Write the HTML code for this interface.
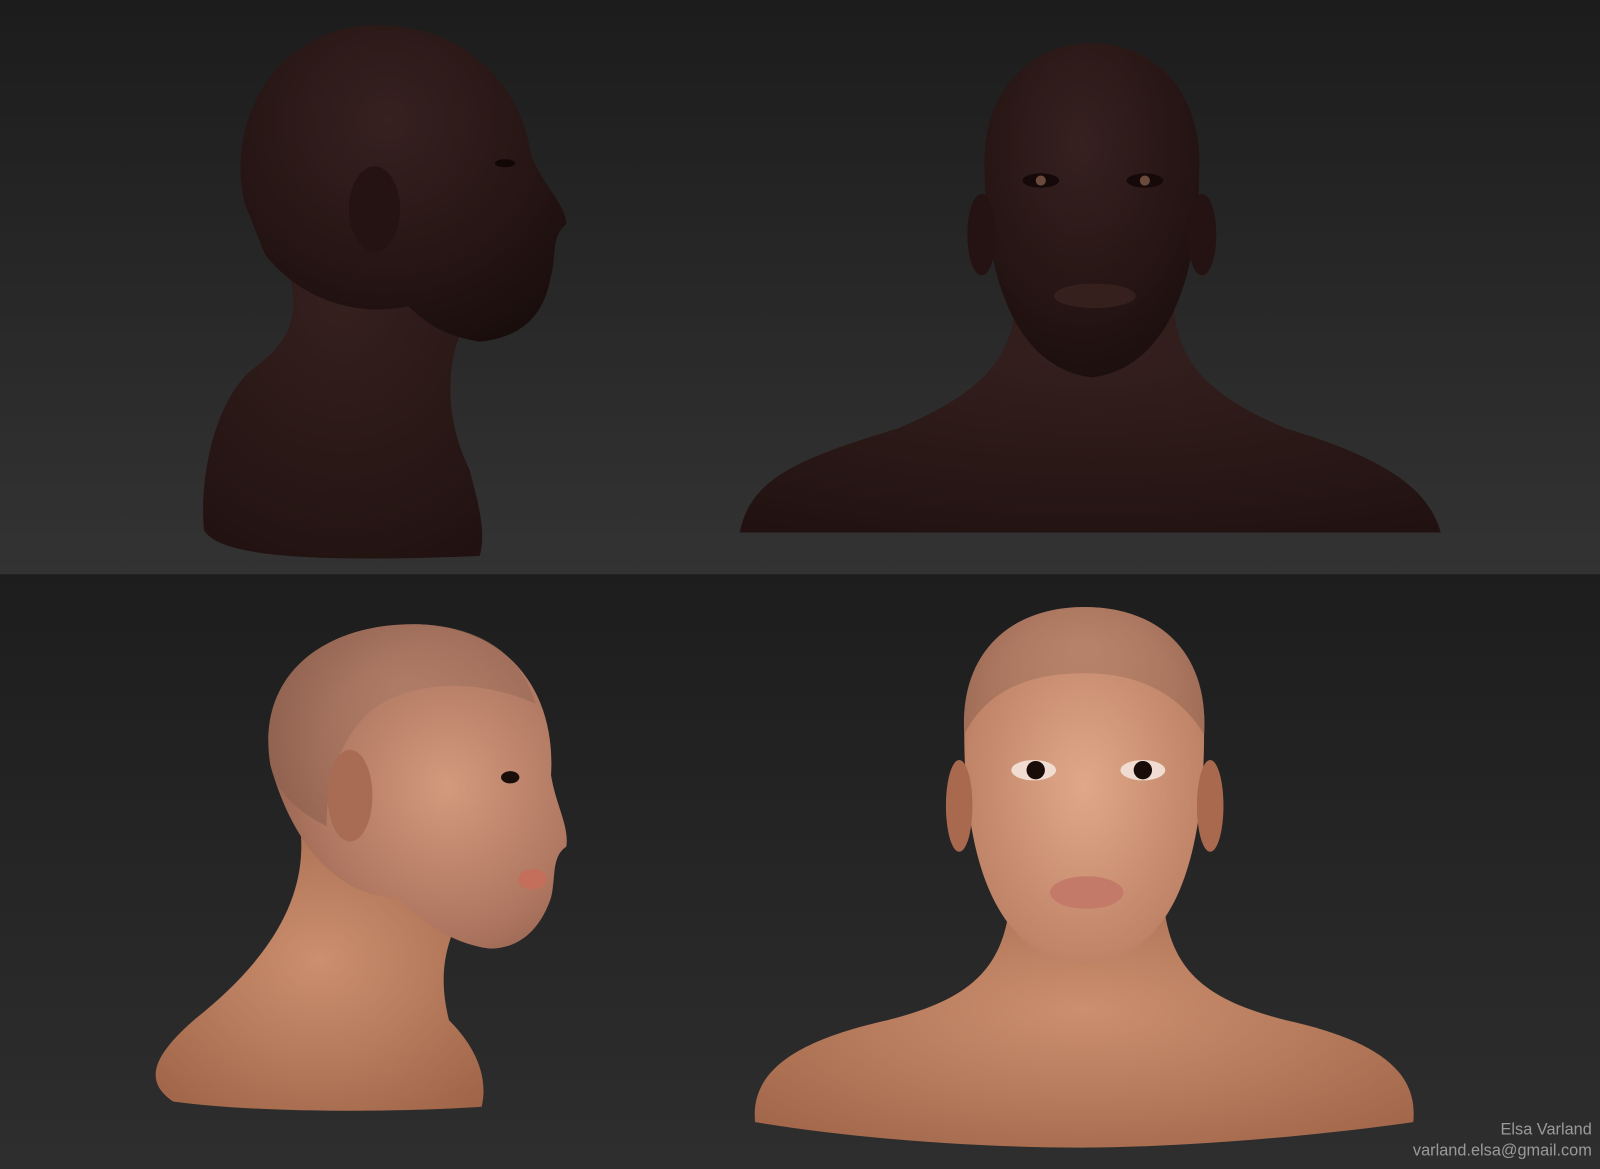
<!DOCTYPE html>
<html><head><meta charset="utf-8"><style>
html,body{margin:0;padding:0;background:#262626;}
svg{display:block;}
</style></head><body>
<svg width="1600" height="1169" viewBox="0 0 1568 1146" preserveAspectRatio="none" xmlns="http://www.w3.org/2000/svg">
<defs>
<linearGradient id="bgT" x1="0" y1="0" x2="0" y2="1"><stop offset="0" stop-color="#1c1c1c"/><stop offset="1" stop-color="#333333"/></linearGradient>
<linearGradient id="bgB" x1="0" y1="0" x2="0" y2="1"><stop offset="0" stop-color="#1d1d1d"/><stop offset="1" stop-color="#2e2e2e"/></linearGradient>
<radialGradient id="dk" cx="0.45" cy="0.3" r="0.8"><stop offset="0" stop-color="#362120"/><stop offset="0.6" stop-color="#261514"/><stop offset="1" stop-color="#180d0c"/></radialGradient>
<radialGradient id="dkb" cx="0.5" cy="0.2" r="0.9"><stop offset="0" stop-color="#35201e"/><stop offset="1" stop-color="#211211"/></radialGradient>
<radialGradient id="lt" cx="0.6" cy="0.5" r="0.75"><stop offset="0" stop-color="#d49a7e"/><stop offset="0.6" stop-color="#ae7660"/><stop offset="1" stop-color="#7e5242"/></radialGradient>
<radialGradient id="ltb" cx="0.5" cy="0.45" r="0.8"><stop offset="0" stop-color="#cc9070"/><stop offset="1" stop-color="#9a5f43"/></radialGradient>
<radialGradient id="ltf" cx="0.5" cy="0.5" r="0.7"><stop offset="0" stop-color="#e0a888"/><stop offset="0.7" stop-color="#c08468"/><stop offset="1" stop-color="#946050"/></radialGradient>
<radialGradient id="scalp" cx="0.5" cy="0.3" r="0.7"><stop offset="0" stop-color="#a87a66"/><stop offset="1" stop-color="#8a5e4c"/></radialGradient>
</defs>
<rect x="0" y="0" width="1568" height="563" fill="url(#bgT)"/>
<rect x="0" y="563" width="1568" height="583" fill="url(#bgB)"/>

<!-- top-left profile dark -->
<path d="M270,230 C300,300 290,330 250,360 C210,390 195,470 200,520 C215,545 300,552 470,545 C478,520 465,480 460,460 C440,420 435,370 450,330 L420,290 Z" fill="url(#dkb)"/>
<path d="M240,200 C220,120 270,30 360,25 C450,20 510,80 520,150 C530,180 555,200 555,220 C540,230 545,255 540,270 C535,300 520,330 470,335 C440,330 420,320 400,300 C360,310 300,300 260,250 Z" fill="url(#dk)"/>
<ellipse cx="367" cy="205" rx="25" ry="42" fill="#241312"/>
<ellipse cx="495" cy="160" rx="10" ry="4" fill="#110806"/>

<!-- top-right front dark -->
<path d="M725,522 C735,470 780,450 880,420 C950,390 990,360 995,300 L1150,300 C1155,360 1190,390 1260,420 C1360,450 1400,480 1412,522 Z" fill="url(#dkb)"/>
<path d="M965,170 C960,90 1010,42 1070,42 C1130,42 1180,90 1175,170 C1175,260 1150,360 1070,370 C990,360 965,260 965,170 Z" fill="url(#dk)"/>
<ellipse cx="962" cy="230" rx="14" ry="40" fill="#241312"/>
<ellipse cx="1178" cy="230" rx="14" ry="40" fill="#241312"/>
<ellipse cx="1020" cy="177" rx="18" ry="7" fill="#150a09"/>
<ellipse cx="1122" cy="177" rx="18" ry="7" fill="#150a09"/>
<ellipse cx="1020" cy="177" rx="5" ry="5" fill="#6a4a3a"/>
<ellipse cx="1122" cy="177" rx="5" ry="5" fill="#6a4a3a"/>
<ellipse cx="1073" cy="290" rx="40" ry="12" fill="#36201e"/>

<!-- bottom-left profile light -->
<path d="M295,820 C300,900 240,960 190,1000 C150,1035 140,1060 170,1080 C260,1092 400,1090 472,1085 C478,1060 470,1030 440,1000 C430,960 435,930 450,900 L430,820 Z" fill="url(#ltb)"/>
<path d="M265,750 C250,660 320,610 410,612 C500,615 545,680 540,760 C545,790 558,810 555,830 C540,840 545,860 540,880 C530,910 510,930 480,930 C440,925 410,900 390,880 C340,880 290,840 265,750 Z" fill="url(#lt)"/>
<path d="M265,750 C250,660 320,610 410,612 C470,614 510,640 525,690 C470,665 400,665 360,700 C330,730 320,770 320,810 C290,795 270,775 265,750 Z" fill="url(#scalp)" opacity="0.55"/>
<ellipse cx="343" cy="780" rx="22" ry="45" fill="#a86c54"/>
<ellipse cx="500" cy="762" rx="9" ry="6" fill="#1a0e0a"/>
<ellipse cx="522" cy="862" rx="14" ry="10" fill="#c46e5c"/>

<!-- bottom-right front light -->
<path d="M740,1100 C735,1050 780,1020 870,1000 C950,980 985,950 990,880 L1140,880 C1145,950 1180,980 1260,1000 C1350,1020 1390,1050 1385,1100 C1280,1115 1150,1125 1060,1125 C950,1125 830,1115 740,1100 Z" fill="url(#ltb)"/>
<path d="M945,720 C940,640 990,595 1063,595 C1136,595 1185,640 1180,720 C1180,820 1160,940 1063,945 C966,940 945,820 945,720 Z" fill="url(#ltf)"/>
<path d="M945,720 C940,640 990,595 1063,595 C1136,595 1185,640 1180,720 C1150,670 1100,660 1063,660 C1020,660 970,670 945,720 Z" fill="url(#scalp)" opacity="0.5"/>
<ellipse cx="940" cy="790" rx="13" ry="45" fill="#a8694f"/>
<ellipse cx="1186" cy="790" rx="13" ry="45" fill="#a8694f"/>
<ellipse cx="1013" cy="755" rx="22" ry="10" fill="#f0dcd0"/>
<ellipse cx="1120" cy="755" rx="22" ry="10" fill="#f0dcd0"/>
<circle cx="1015" cy="755" r="9" fill="#1a0c08"/>
<circle cx="1120" cy="755" r="9" fill="#1a0c08"/>
<ellipse cx="1065" cy="875" rx="36" ry="16" fill="#c47a68"/>

<text x="1560" y="1112" text-anchor="end" fill="#9a9a9a" font-family="Liberation Sans, sans-serif" font-size="16">Elsa Varland</text>
<text x="1560" y="1133" text-anchor="end" fill="#9a9a9a" font-family="Liberation Sans, sans-serif" font-size="16">varland.elsa@gmail.com</text>
</svg>
</body></html>
